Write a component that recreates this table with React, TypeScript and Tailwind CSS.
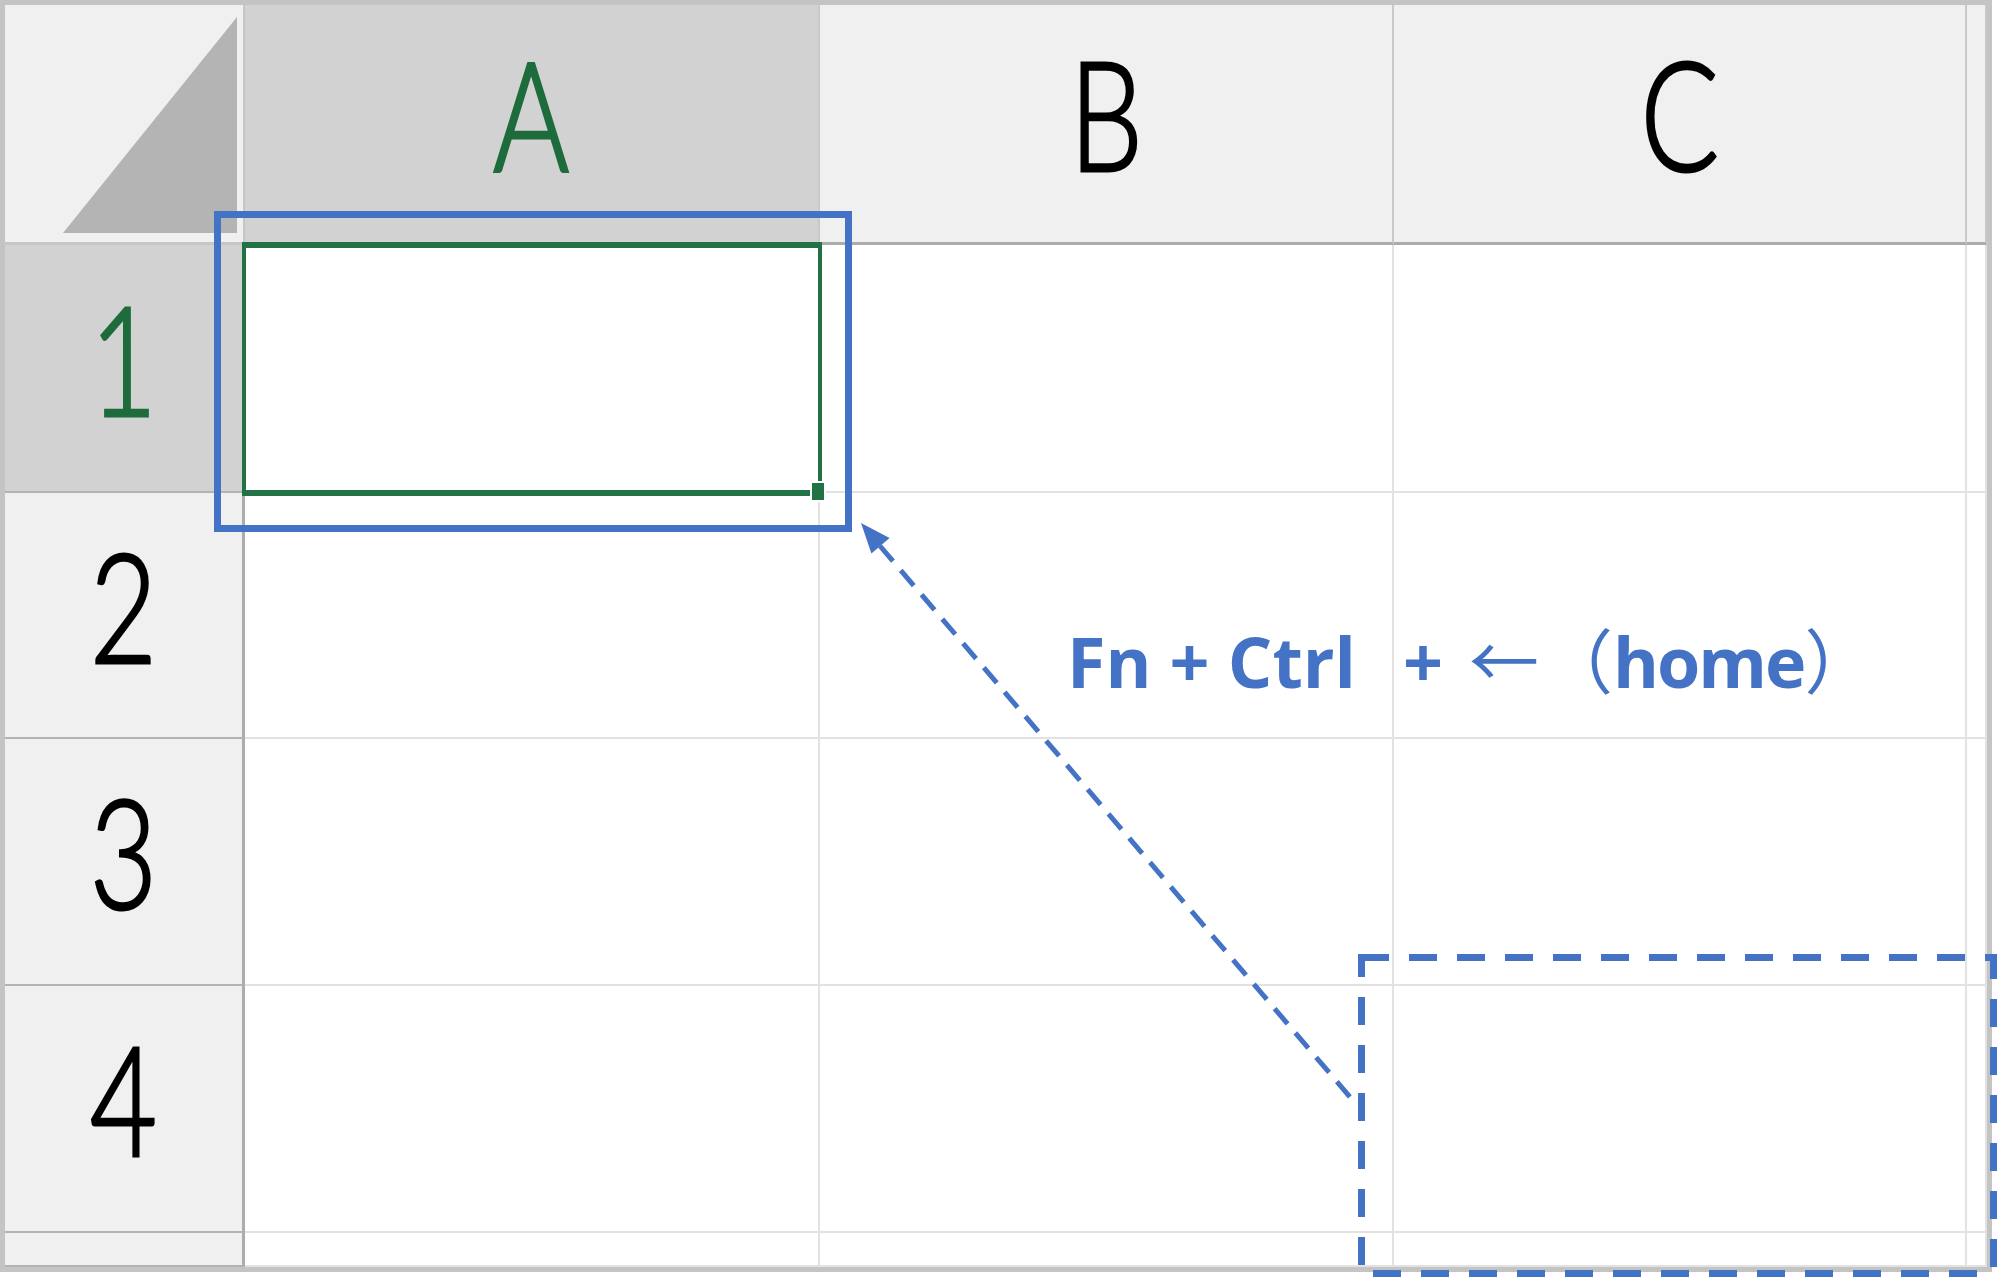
import React from 'react'

const cols = ['A', 'B', 'C', '']
const rows = ['1', '2', '3', '4', '']
const BLUE = '#4472c4'

// big narrow header label, like Excel's zoomed-in headers
const Label = ({ text, active }: { text: string; active?: boolean }) => (
  <span
    className={`font-['Lato',sans-serif] font-light text-[153px] leading-none scale-x-[0.76] -translate-y-[11px] [-webkit-text-stroke:3px_currentColor] ${
      active ? 'text-[#1e6b3c]' : 'text-black'
    }`}
  >
    {text}
  </span>
)

const CornerCell = () => (
  <div className="relative bg-[#f0f0f0] border-r-2 border-b-[3px] border-[#c6c6c6]">
    <svg className="absolute top-0 left-0" width="238" height="237" viewBox="0 0 238 237">
      <polygon points="58,228 232,228 232,12" fill="#b4b4b4" />
    </svg>
  </div>
)

const ColHeader = ({ label, active }: { label: string; active: boolean }) => (
  <div
    className={`flex items-center justify-center border-r-2 border-r-[#c9c9c9] border-b-[3px] border-b-[#acacac] ${
      active ? 'bg-[#d2d2d2]' : 'bg-[#f0f0f0]'
    }`}
  >
    {label && <Label text={label} active={active} />}
  </div>
)

const RowHeader = ({ label, active }: { label: string; active: boolean }) => (
  <div
    className={`flex items-center justify-center border-r-[3px] border-r-[#acacac] border-b-2 border-b-[#b3b3b3] ${
      active ? 'bg-[#d2d2d2]' : 'bg-[#f0f0f0]'
    }`}
  >
    {label && <Label text={label} active={active} />}
  </div>
)

const Cell = ({ selected }: { selected?: boolean }) => (
  <div className={`bg-white border-r-2 border-b-2 border-[#e2e2e2] ${selected ? 'relative z-10' : ''}`}>
    {selected && (
      <>
        {/* active cell outline */}
        <div className="absolute -top-[3px] -left-[3px] w-[580px] h-[254px] border-y-[6px] border-x-4 border-[#217346]" />
        {/* fill handle */}
        <div className="absolute left-[565px] top-[236px] w-[16px] h-[21px] border-2 border-white bg-[#217346]" />
      </>
    )}
  </div>
)

export default function App() {
  return (
    <div className="relative w-[1997px] h-[1277px] bg-white overflow-hidden">
      {/* sheet */}
      <div className="w-[1992px] h-[1272px] border-[5px] border-[#c4c4c4] overflow-hidden">
        <div className="grid h-full grid-cols-[240px_575px_574px_573px_20px] grid-rows-[240px_248px_246px_247px_247px_34px]">
          <CornerCell />
          {cols.map((c) => (
            <ColHeader key={'h' + c} label={c} active={c === 'A'} />
          ))}
          {rows.map((r, ri) => (
            <React.Fragment key={'r' + ri}>
              <RowHeader label={r} active={r === '1'} />
              {cols.map((c, ci) => (
                <Cell key={ci} selected={r === '1' && c === 'A'} />
              ))}
            </React.Fragment>
          ))}
        </div>
      </div>

      {/* annotation drawing */}
      <svg className="absolute top-0 left-0 z-20 pointer-events-none" width="1997" height="1277" viewBox="0 0 1997 1277">
        <rect x="217.5" y="214.5" width="631" height="314" fill="none" stroke={BLUE} strokeWidth="7" />
        <line x1="880" y1="546" x2="1356" y2="1104" stroke={BLUE} strokeWidth="5" strokeDasharray="20 12" />
        <polygon points="861,523 889.6,538 871.4,553.6" fill={BLUE} />
        <g stroke={BLUE} strokeWidth="7" strokeDasharray="28 20" fill="none">
          <path d="M1358 957.5 H2000" strokeDashoffset="45" />
          <path d="M1361.5 954 V1280" strokeDashoffset="5" />
          <path d="M1993.5 954 V1280" strokeDashoffset="3" />
          <path d="M1358 1273.5 H2000" strokeDashoffset="33" />
        </g>
      </svg>

      {/* shortcut label */}
      <div className="absolute z-20 left-[1067px] top-[623px] whitespace-nowrap font-['Open_Sans','Noto_Sans_CJK_JP',sans-serif] text-[70px] leading-none text-[#4472c4]">
        <span className="font-bold">Fn + Ctrl</span>
        <span className="font-bold ml-[47px]">+</span>
        <span className="font-['Noto_Sans_CJK_JP',sans-serif] font-normal ml-[26px]">←</span>
        <span className="font-['Noto_Sans_CJK_JP',sans-serif] font-normal ml-[4px]">（</span>
        <span className="font-bold tracking-[-2px]">home</span>
        <span className="font-['Noto_Sans_CJK_JP',sans-serif] font-normal">）</span>
      </div>
    </div>
  )
}
